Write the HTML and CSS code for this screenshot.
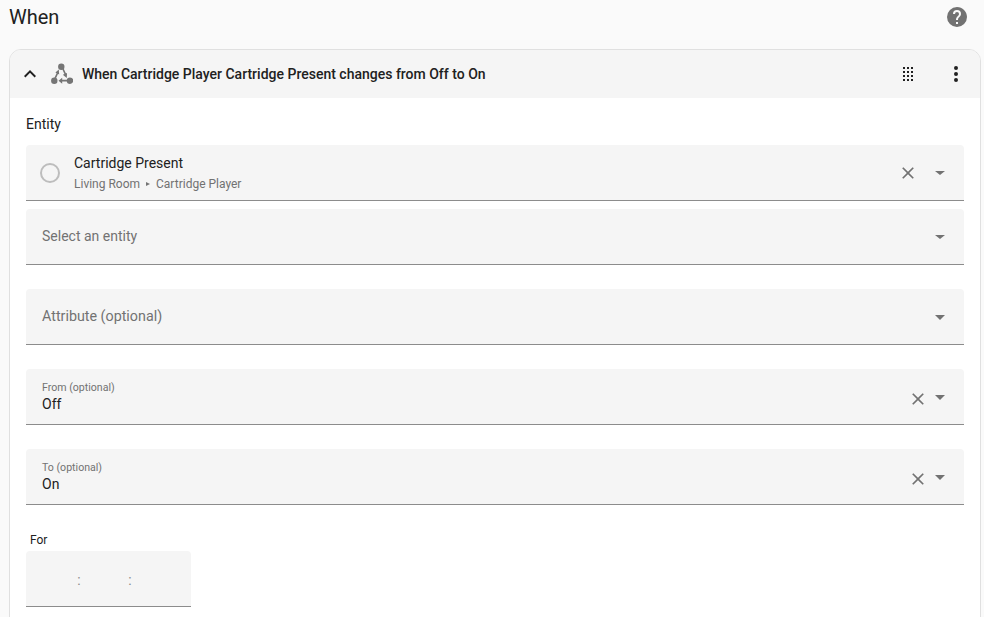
FILE: index.html
```html
<!DOCTYPE html>
<html lang="en">
<head>
    <meta charset="UTF-8">
    <title>When</title>
    <link rel="stylesheet" href="styles.css">
</head>
<body>
    <div class="title-row">
        <h1>When</h1>
        <svg class="help-icon" viewBox="0 0 24 24"><path d="M15.07 11.25l-.9.92C13.45 12.89 13 13.5 13 15h-2v-.5c0-1.11.45-2.11 1.17-2.83l1.24-1.26c.37-.36.59-.86.59-1.41a2 2 0 0 0-2-2 2 2 0 0 0-2 2H8a4 4 0 0 1 4-4 4 4 0 0 1 4 4c0 .88-.36 1.67-.93 2.25M13 19h-2v-2h2M12 2A10 10 0 0 0 2 12a10 10 0 0 0 10 10 10 10 0 0 0 10-10c0-5.53-4.5-10-10-10z"/></svg>
    </div>

    <div class="card">
        <div class="card-header">
            <svg class="chevron" viewBox="0 0 24 24"><path d="M7.41 15.41L12 10.83l4.59 4.58L18 14l-6-6-6 6z"/></svg>
            <svg class="trigger-icon" viewBox="0 0 24 24">
                <circle cx="12.3" cy="4.7" r="3.2"/>
                <circle cx="5.3" cy="18.7" r="3.2"/>
                <circle cx="21" cy="18.7" r="3.2"/>
                <path class="trigger-line" d="M6 16.5L8.8 10.5M14 7L17 13.5M18.5 18.7H12"/>
                <path d="M9.8 7.5L10.2 12.5 6.4 10.6zM17.8 16L13.8 12.8 18 10.9zM9.5 18.7l3.7-3v6z"/>
            </svg>
            <span class="card-title">When Cartridge Player Cartridge Present changes from Off to On</span>
            <svg class="drag-icon" viewBox="0 0 10 14">
                <path d="M0 0h2v2H0zM4 0h2v2H4zM8 0h2v2H8zM0 4h2v2H0zM4 4h2v2H4zM8 4h2v2H8zM0 8h2v2H0zM4 8h2v2H4zM8 8h2v2H8zM0 12h2v2H0zM4 12h2v2H4zM8 12h2v2H8z"/>
            </svg>
            <svg class="menu-icon" viewBox="0 0 24 24"><path d="M12 16a2 2 0 0 1 2 2 2 2 0 0 1-2 2 2 2 0 0 1-2-2 2 2 0 0 1 2-2m0-6a2 2 0 0 1 2 2 2 2 0 0 1-2 2 2 2 0 0 1-2-2 2 2 0 0 1 2-2m0-6a2 2 0 0 1 2 2 2 2 0 0 1-2 2 2 2 0 0 1-2-2 2 2 0 0 1 2-2z"/></svg>
        </div>

        <div class="card-body">
            <div class="section-label">Entity</div>

            <div class="field entity-field">
                <span class="state-circle"></span>
                <div class="field-text">
                    <div class="entity-name">Cartridge Present</div>
                    <div class="entity-path">Living Room <span class="path-sep"></span> Cartridge Player</div>
                </div>
                <svg class="clear-icon clear-wide" viewBox="0 0 24 24"><path d="M19 6.41L17.59 5 12 10.59 6.41 5 5 6.41 10.59 12 5 17.59 6.41 19 12 13.41 17.59 19 19 17.59 13.41 12z"/></svg>
                <span class="arrow arrow-small"></span>
            </div>

            <div class="field entity-select">
                <span class="placeholder">Select an entity</span>
                <span class="arrow arrow-small"></span>
            </div>

            <div class="field attribute-field">
                <span class="placeholder attribute-text">Attribute (optional)</span>
                <span class="arrow arrow-low"></span>
            </div>

            <div class="field value-field">
                <div class="field-text">
                    <div class="float-label">From (optional)</div>
                    <div class="field-value">Off</div>
                </div>
                <svg class="clear-icon" viewBox="0 0 24 24"><path d="M19 6.41L17.59 5 12 10.59 6.41 5 5 6.41 10.59 12 5 17.59 6.41 19 12 13.41 17.59 19 19 17.59 13.41 12z"/></svg>
                <span class="arrow arrow-low"></span>
            </div>

            <div class="field value-field">
                <div class="field-text">
                    <div class="float-label">To (optional)</div>
                    <div class="field-value">On</div>
                </div>
                <svg class="clear-icon" viewBox="0 0 24 24"><path d="M19 6.41L17.59 5 12 10.59 6.41 5 5 6.41 10.59 12 5 17.59 6.41 19 12 13.41 17.59 19 19 17.59 13.41 12z"/></svg>
                <span class="arrow arrow-low"></span>
            </div>

            <div class="for-label">For</div>
            <div class="time-box">
                <span>:</span>
                <span>:</span>
            </div>
        </div>
    </div>
</body>
</html>
```

FILE: styles.css
```css
html, body {
    height: 617px;
    overflow: hidden;
}

body {
    margin: 0;
    background: #fafafa;
    color: #212121;
    font-family: Roboto, sans-serif;
}

.title-row {
    display: flex;
    align-items: center;
    justify-content: space-between;
    height: 34px;
    padding: 0 15px 0 9px;
    margin-bottom: 15px;
}

h1 {
    margin: 0;
    font-size: 20px;
    font-weight: 400;
}

.help-icon {
    width: 24px;
    height: 24px;
    fill: #727272;
}

.card {
    margin: 0 3px 0 9px;
    border: 1px solid #e0e0e0;
    border-radius: 12px;
    background: #fff;
    overflow: hidden;
}

.card-header {
    display: flex;
    align-items: center;
    height: 48px;
    background: #f5f5f5;
}

.chevron {
    width: 24px;
    height: 24px;
    margin-left: 8px;
    fill: #212121;
}

.trigger-icon {
    width: 24px;
    height: 24px;
    margin-left: 7px;
    fill: #757575;
}

.trigger-line {
    fill: none;
    stroke: #757575;
    stroke-width: 1.7;
}

.card-title {
    margin-left: 9px;
    font-size: 14px;
    font-weight: 500;
    flex: 1;
}

.drag-icon {
    width: 10px;
    height: 14px;
    margin-right: 31px;
    fill: #212121;
}

.menu-icon {
    width: 24px;
    height: 24px;
    margin-right: 12px;
    fill: #212121;
}

.card-body {
    padding: 16px 16px 30px;
}

.section-label {
    font-size: 14px;
    line-height: 20px;
    margin-bottom: 11px;
}

.field {
    display: flex;
    align-items: center;
    height: 56px;
    box-sizing: border-box;
    padding: 0 19px 0 16px;
    background: #f5f5f5;
    border-bottom: 1px solid #8c8c8c;
    border-radius: 4px 4px 0 0;
}

.entity-field {
    margin-bottom: 8px;
    padding-left: 14px;
}

.entity-select {
    margin-bottom: 24px;
}

.attribute-field,
.value-field {
    margin-bottom: 24px;
}

.state-circle {
    width: 16px;
    height: 16px;
    border: 2px solid #bdbdbd;
    border-radius: 50%;
    margin-right: 14px;
}

.field-text {
    flex: 1;
    padding-top: 2px;
}

.entity-field .field-text {
    padding-top: 0;
}

.entity-name {
    font-size: 14px;
    line-height: 20px;
}

.entity-path {
    font-size: 12px;
    line-height: 16px;
    margin-top: 3px;
    color: #727272;
}

.path-sep {
    display: inline-block;
    margin: 0 3px;
    vertical-align: 2px;
    border-left: 4px solid #757575;
    border-top: 2px solid transparent;
    border-bottom: 2px solid transparent;
}

.placeholder {
    flex: 1;
    font-size: 14px;
    margin-bottom: 2px;
    color: #727272;
}

.attribute-text {
    font-size: 14.3px;
    margin-bottom: 1px;
}

.float-label {
    font-size: 10.6px;
    line-height: 14px;
    color: #727272;
}

.field-value {
    font-size: 14px;
    line-height: 20px;
    margin-top: -1px;
}

.clear-icon {
    width: 20px;
    height: 20px;
    fill: #727272;
    margin: 4px 7px 0 0;
}

.clear-wide {
    margin: 0 17px 0 0;
}

.arrow {
    width: 0;
    height: 0;
    border-left: 5px solid transparent;
    border-right: 5px solid transparent;
    border-top: 5px solid #727272;
}

.arrow-small {
    border-top-width: 4px;
}

.arrow-low {
    margin-top: 2px;
}

.for-label {
    font-size: 12px;
    line-height: 16px;
    padding-left: 4px;
    margin: 27px 0 3px;
}

.time-box {
    display: flex;
    align-items: center;
    gap: 47.6px;
    width: 165px;
    height: 56px;
    box-sizing: border-box;
    padding: 2px 0 0 51.3px;
    background: #f5f5f5;
    border-bottom: 1px solid #8c8c8c;
    border-radius: 4px 4px 0 0;
    font-size: 14px;
    color: #8a8a8a;
}
```
